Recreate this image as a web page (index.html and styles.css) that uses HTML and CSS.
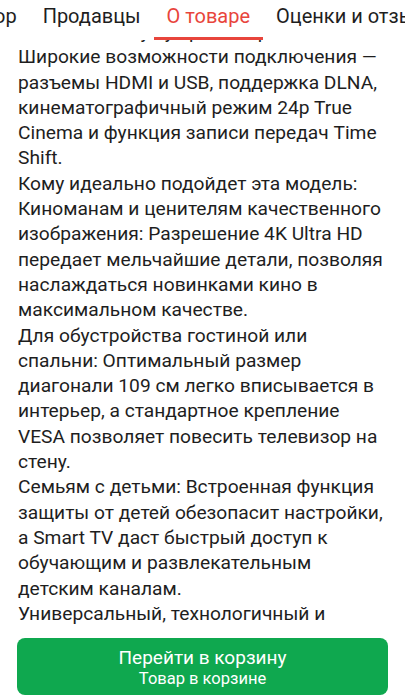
FILE: index.html
```html
<!DOCTYPE html>
<html lang="ru">
<head>
<meta charset="utf-8">
<link rel="stylesheet" href="styles.css">
</head>
<body>
<div class="page">
  <div class="tabs">
    <div class="tabs-track">
      <div class="tab">Обзор</div>
      <div class="tab">Продавцы</div>
      <div class="tab active">О товаре</div>
      <div class="tab">Оценки и отзывы</div>
    </div>
  </div>
  <div class="content">
    <div class="text">
      <p>Объемный звук у яркой картинки.</p>
      <p>Широкие возможности подключения — разъемы HDMI и USB, поддержка DLNA, кинематографичный режим 24p True Cinema и функция записи передач Time Shift.</p>
      <p>Кому идеально подойдет эта модель:</p>
      <p>Киноманам и ценителям качественного изображения: Разрешение 4K Ultra HD передает мельчайшие детали, позволяя наслаждаться новинками кино в максимальном качестве.</p>
      <p>Для обустройства гостиной или спальни: Оптимальный размер диагонали 109 см легко вписывается в интерьер, а стандартное крепление VESA позволяет повесить телевизор на стену.</p>
      <p>Семьям с детьми: Встроенная функция защиты от детей обезопасит настройки, а Smart TV даст быстрый доступ к обучающим и развлекательным детским каналам.</p>
      <p>Универсальный, технологичный и функциональный телевизор для всей семьи.</p>
    </div>
  </div>
  <div class="footer">
    <button class="cart-btn">
      <span class="cart-main">Перейти в корзину</span>
      <span class="cart-sub">Товар в корзине</span>
    </button>
  </div>
</div>
</body>
</html>
```
FILE: styles.css
```css
html, body {
  margin: 0;
  padding: 0;
  background: #ffffff;
}
body {
  font-family: Roboto, "Noto Sans", sans-serif;
  color: #1e1e1e;
}
.page {
  height: 699px;
  display: flex;
  flex-direction: column;
  overflow: hidden;
}
.tabs {
  height: 40px;
  flex: none;
  overflow: hidden;
  background: #ffffff;
}
.tabs-track {
  display: flex;
  margin-left: -54px;
  height: 40px;
}
.tab {
  flex: none;
  padding: 0 13px;
  font-size: 20px;
  height: 37px;
  line-height: 32px;
  color: #1e1e1e;
  white-space: nowrap;
  border-bottom: 3px solid transparent;
}
.tab.active {
  color: #e8453c;
  border-bottom-color: #e8453c;
}
.content {
  flex: 1;
  overflow: hidden;
}
.text {
  margin-top: -21px;
  padding: 0 18px;
  font-size: 19.2px;
  line-height: 25.3px;
}
.text p {
  margin: 0;
}
.footer {
  flex: none;
  height: 69px;
  box-sizing: border-box;
  padding: 8px 17px 4px;
  background: #ffffff;
}
.cart-btn {
  width: 100%;
  height: 57px;
  border: none;
  border-radius: 8px;
  background: #0fa84f;
  color: #ffffff;
  font-family: Roboto, "Noto Sans", sans-serif;
  display: flex;
  flex-direction: column;
  align-items: center;
  justify-content: center;
  padding: 0;
}
.cart-main {
  font-size: 19px;
  line-height: 23px;
}
.cart-sub {
  font-size: 16.5px;
  line-height: 19px;
}
```
